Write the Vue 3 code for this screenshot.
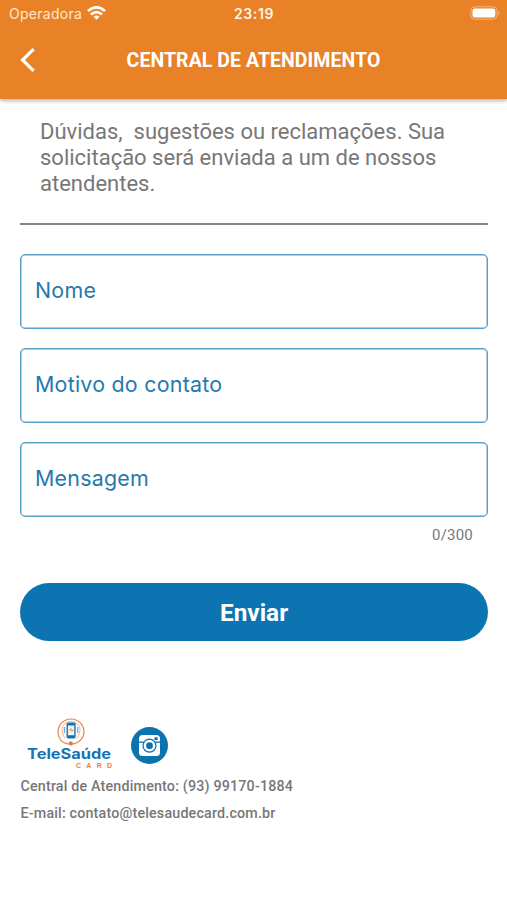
<script setup>
import { ref } from 'vue'

const fields = ref(['Nome', 'Motivo do contato', 'Mensagem'])
</script>

<template>
  <div class="screen">
    <header class="header">
      <div class="status">
        <div class="carrier">
          <span class="operator">Operadora</span>
          <svg class="wifi" width="19" height="14" viewBox="0 0 19 14" fill="none" stroke="#fff" stroke-width="2.7">
            <path d="M1 5Q9.5 -2.4 18 5" />
            <path d="M4 8.5Q9.5 3.7 15 8.5" />
            <path d="M9.5 13.7L6.5 10.8Q9.5 8.4 12.5 10.8Z" fill="#fff" stroke="none" />
          </svg>
        </div>
        <span class="clock">23:19</span>
        <svg class="battery" width="31" height="14" viewBox="0 0 31 14">
          <rect x="0.8" y="0.8" width="26.2" height="12.4" rx="4" fill="none" stroke="#fff" stroke-opacity=".42" />
          <rect x="2.5" y="2.4" width="22.8" height="9.2" rx="2.5" fill="#fff" />
          <path d="M28.5 4.8Q30.7 7 28.5 9.2Z" fill="#fff" fill-opacity=".45" />
        </svg>
      </div>
      <div class="toolbar">
        <svg class="back" width="16" height="24" viewBox="0 0 16 24" fill="none" stroke="#fff" stroke-width="3.2">
          <path d="M13.6 1.2L2.6 12L13.6 22.8" />
        </svg>
        <h1 class="title">CENTRAL DE ATENDIMENTO</h1>
      </div>
    </header>

    <main class="content">
      <p class="intro">Dúvidas,&nbsp; sugestões ou reclamações. Sua<br />solicitação será enviada a um de nossos<br />atendentes.</p>
      <div class="form">
        <div v-for="label in fields" :key="label" class="field"><span>{{ label }}</span></div>
      </div>
      <div class="counter"><span>0/300</span></div>
      <button class="send"><span>Enviar</span></button>
    </main>

    <footer class="footer">
      <div class="brands">
        <svg class="logo" width="86" height="54" viewBox="0 0 86 54">
          <g fill="none" stroke="#ec8245" stroke-width="1.2">
            <path d="M41.5 26.2C34 25 31 19.5 31 14C31 6.5 37 1 44 1S57 6.5 57 14C57 20 52 25 46 26.2" />
            <path d="M38.5 20.5C31 11 37 3.5 44 3.5S57 11 49.5 20.5" stroke-width=".6" />
          </g>
          <circle cx="43.8" cy="25.4" r="2.2" fill="#e9783b" />
          <rect x="40.2" y="5.2" width="7.8" height="14.5" rx="1.3" fill="#eef6fb" stroke="#1472b1" stroke-width="1.4" />
          <path d="M40.5 6.4h7M40.5 18.2h7" stroke="#1472b1" stroke-width="2" />
          <path d="M37.3 9v6M50.8 9v6" stroke="#4b94c4" stroke-width="1" />
          <path d="M41.7 12h1.4l.7-1.5 1.2 3 .8-1.5h1" fill="none" stroke="#ec8245" stroke-width=".8" />
          <text class="brand-name" x="0" y="41" textLength="84" lengthAdjust="spacingAndGlyphs">TeleSaúde</text>
          <text class="brand-card" x="49" y="50.2" textLength="36">CARD</text>
        </svg>
        <svg class="instagram" width="37" height="37" viewBox="0 0 36 36">
          <circle cx="18" cy="18" r="18" fill="#0c73af" />
          <rect x="7.8" y="7.8" width="20.4" height="20.4" rx="3.5" fill="#fff" />
          <path d="M7.5 14.8h21" stroke="#0c73af" stroke-width="1.3" />
          <circle cx="18" cy="18.2" r="6.9" fill="#0c73af" />
          <circle cx="18" cy="18.2" r="4.5" fill="#0c73af" stroke="#fff" stroke-width="2.4" />
          <rect x="22.8" y="10" width="3.2" height="2.6" rx=".5" fill="#0c73af" />
        </svg>
      </div>
      <p class="phone"><span>Central de Atendimento: (93) 99170-1884</span></p>
      <p class="mail"><span>E-mail: contato@telesaudecard.com.br</span></p>
    </footer>
  </div>
</template>

<style>
body { margin: 0; background: #fff; }
</style>

<style scoped>
* { box-sizing: border-box; }
.screen { width: 507px; height: 900px; overflow: hidden; background: #fff; font-family: Roboto, sans-serif; color: #777; }
.header { height: 98.5px; background: #e98126; box-shadow: 0 2px 4px rgba(0, 0, 0, .28); color: #fff; }
.status { display: grid; grid-template-columns: 1fr auto 1fr; align-items: center; height: 27px; padding: 0 6px 0 9px; font-family: Inter, sans-serif; }
.carrier { display: flex; align-items: center; gap: 5px; }
.operator { font-size: 14px; letter-spacing: .27px; color: #ffe8d2; line-height: 27px; }
.wifi { display: block; margin-top: -2px; }
.clock { margin-right: 2px; font-size: 14px; font-weight: 600; letter-spacing: .6px; color: #fff4e9; }
.battery { justify-self: end; margin-top: -1px; }
.toolbar { display: grid; grid-template-columns: 50px 1fr 50px; align-items: center; height: 66px; }
.back { margin-left: 20px; }
.title { margin: 0; padding-top: 2px; text-align: center; font-size: 19.5px; font-weight: 700; line-height: 24px; letter-spacing: .05px; white-space: nowrap; }
.content { padding: 20.5px 19px 0 20px; }
.intro { margin: 0; height: 106px; padding: 0 20px; border-bottom: 2px solid #858585; font-size: 22px; line-height: 26px; white-space: nowrap; }
.form { display: flex; flex-direction: column; gap: 19px; margin-top: 29px; }
.field { display: flex; align-items: center; height: 75px; padding: 0 14px 4px; border: 1px solid #5a9fc9; box-shadow: inset 0 0 0 .5px #5a9fc9; border-radius: 5px; color: #2579ad; font-family: Inter, sans-serif; font-size: 21.4px; letter-spacing: .25px; }
.counter { padding: 8px 15px 0 0; height: 66px; text-align: right; font-size: 15px; line-height: 20px; letter-spacing: .2px; }
.send { display: block; width: 468px; height: 58px; padding: 2px 0 0; border: 0; border-radius: 29px; background: #0c74b0; color: #fff; font: 700 24.4px/30px Roboto, sans-serif; }
.footer { padding: 76px 20px 0 20.5px; font-size: 14.3px; font-weight: 500; }
.brands { display: flex; align-items: center; gap: 18px; padding-left: 6.5px; height: 56px; }
.logo { display: block; }
.instagram { display: block; }
.brand-name { font: 700 14.5px Inter, sans-serif; fill: #1472b1; }
.brand-card { font: 700 7px "Liberation Sans", sans-serif; fill: #ed7e36; }
.phone, .mail { margin: 0; height: 27px; line-height: 26px; white-space: nowrap; letter-spacing: .17px; }
</style>
